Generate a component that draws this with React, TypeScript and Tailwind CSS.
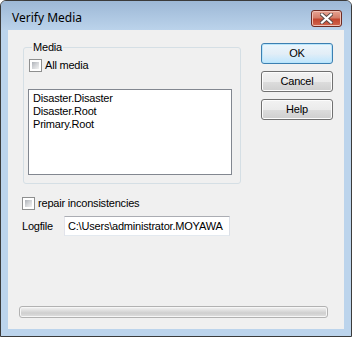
import React from "react";

const font = { fontFamily: '"Liberation Sans", Arial, sans-serif' };

function CheckBox() {
  return (
    <span className="inline-flex w-[13px] h-[13px] shrink-0 border border-[#8e8f8f] bg-white p-[2px]">
      <span className="block w-full h-full bg-gradient-to-br from-[#aeb2b8] via-[#d4d6d9] to-[#f3f3f3]" />
    </span>
  );
}

function Btn({ label, primary }: { label: string; primary?: boolean }) {
  return (
    <div
      className={
        "w-[72px] h-[21px] rounded-[3px] border flex items-center justify-center text-[11px] leading-none text-black " +
        (primary
          ? "border-[#3c7fb1] bg-gradient-to-b from-[#eaf6fd] via-[#e3eef7] to-[#bee6fd] shadow-[inset_0_0_0_1px_#b9e5fb]"
          : "border-[#707070] bg-[linear-gradient(to_bottom,#f2f2f2_0%,#ebebeb_50%,#dddddd_51%,#cfcfcf_100%)] shadow-[inset_0_0_0_1px_#fcfcfc]")
      }
    >
      {label}
    </div>
  );
}

export default function App() {
  return (
    <div className="w-[352px] h-[337px] bg-white" style={font}>
      <div className="w-[352px] h-[337px] flex flex-col border border-[#3b3b3b] rounded-t-[6px] bg-[#bcd4ec] overflow-hidden">
        <div className="h-[29px] shrink-0 flex items-start bg-gradient-to-b from-[#9db8d6] to-[#bbd3eb]">
          <span
            className="ml-[11px] mt-[9px] text-[12px] leading-[15px] text-black"
            style={{ fontFamily: '"Noto Sans", "Open Sans", sans-serif' }}
          >
            Verify Media
          </span>
          <div className="ml-auto mr-[9px] mt-[9px] w-[31px] h-[17px] rounded-[3px] border border-[#6e2b22] bg-[linear-gradient(to_bottom,#e8a493_0%,#d47f6b_45%,#c2462f_55%,#d2674f_100%)] shadow-[inset_0_0_0_1px_#f0c0b4] flex items-center justify-center">
            <svg width="13" height="11" viewBox="0 0 13 11">
              <path d="M2 1.5 L11 9.5 M11 1.5 L2 9.5" stroke="#5a4a48" strokeWidth="4" strokeLinecap="square" />
              <path d="M2 1.5 L11 9.5 M11 1.5 L2 9.5" stroke="#ffffff" strokeWidth="2.2" strokeLinecap="square" />
            </svg>
          </div>
        </div>
        <div className="mx-[7px] mb-[7px] flex-1 bg-[#f0f0f0] flex flex-col text-[11px] text-black tracking-[-0.2px]">
          <div className="flex items-start">
            <div className="relative ml-[15px] mt-[17px] w-[218px] h-[137px] border border-[#d5dfe5] rounded-[3px] flex flex-col">
              <span className="absolute left-[8px] top-[-8px] px-[1px] bg-[#f0f0f0] leading-[14px]">Media</span>
              <div className="ml-[5px] mt-[11px] flex items-center gap-[3px] h-[13px]">
                <CheckBox />
                <span className="leading-[13px]">All media</span>
              </div>
              <div className="ml-[4px] mt-[17px] w-[204px] h-[86px] border border-[#828790] bg-white px-[4px] pt-[2px] leading-[13px]">
                <div>Disaster.Disaster</div>
                <div>Disaster.Root</div>
                <div>Primary.Root</div>
              </div>
            </div>
            <div className="ml-[20px] mt-[13px] flex flex-col gap-[7px]">
              <Btn label="OK" primary />
              <Btn label="Cancel" />
              <Btn label="Help" />
            </div>
          </div>
          <div className="ml-[14px] mt-[13px] flex items-center gap-[3px] h-[13px]">
            <CheckBox />
            <span className="leading-[13px]">repair inconsistencies</span>
          </div>
          <div className="ml-[14px] mt-[6px] flex items-center h-[20px]">
            <span className="w-[42px]">Logfile</span>
            <div className="w-[166px] h-[20px] border border-[#abadb3] border-l-[#e2e3ea] border-r-[#dbdfe6] border-b-[#e3e9ef] bg-white flex items-center pl-[3px] overflow-hidden whitespace-nowrap">
              C:\Users\administrator.MOYAWA
            </div>
          </div>
          <div className="mt-auto mb-[11px] ml-[11px] w-[309px] h-[12px] rounded-[3px] border border-[#b2b2b2] bg-[linear-gradient(to_bottom,#f4f4f4_0%,#e2e2e2_30%,#cfcfcf_60%,#dadada_85%,#ececec_100%)] shadow-[inset_0_0_0_1px_#f6f6f6]" />
        </div>
      </div>
    </div>
  );
}
